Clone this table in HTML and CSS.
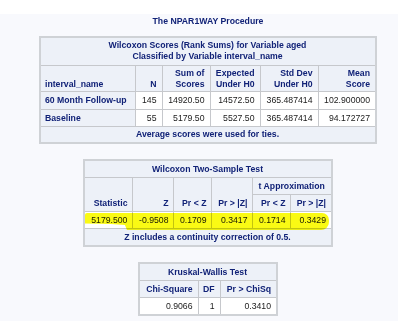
FILE: index.html
```html
<!DOCTYPE html>
<html>
<head>
<meta charset="utf-8">
<link rel="stylesheet" href="styles.css">
</head>
<body>
<div class="topband"></div>
<main class="page">
  <div class="proc-title">The NPAR1WAY Procedure</div>

  <table class="t t1">
    <colgroup>
      <col class="c95"><col class="c27"><col class="c48"><col class="c50"><col class="c58"><col class="c58">
    </colgroup>
    <thead>
      <tr class="r-title2"><th colspan="6" class="ctr">Wilcoxon Scores (Rank Sums) for Variable aged<br>Classified by Variable interval_name</th></tr>
      <tr class="r-head2">
        <th class="l b">interval_name</th>
        <th class="r b">N</th>
        <th class="r b">Sum of<br>Scores</th>
        <th class="r b">Expected<br>Under H0</th>
        <th class="r b">Std Dev<br>Under H0</th>
        <th class="r b">Mean<br>Score</th>
      </tr>
    </thead>
    <tbody>
      <tr class="r18"><th class="l">60 Month Follow-up</th><td>145</td><td>14920.50</td><td>14572.50</td><td>365.487414</td><td>102.900000</td></tr>
      <tr><th class="l">Baseline</th><td>55</td><td>5179.50</td><td>5527.50</td><td>365.487414</td><td>94.172727</td></tr>
      <tr class="r16"><th colspan="6" class="ctr">Average scores were used for ties.</th></tr>
    </tbody>
  </table>

  <table class="t t2">
    <colgroup>
      <col class="c49"><col class="c41"><col class="c38"><col class="c41"><col class="c38"><col class="c41">
    </colgroup>
    <thead>
      <tr><th colspan="6" class="ctr">Wilcoxon Two-Sample Test</th></tr>
      <tr>
        <th rowspan="2" class="r b">Statistic</th>
        <th rowspan="2" class="r b">Z</th>
        <th rowspan="2" class="r b">Pr &lt; Z</th>
        <th rowspan="2" class="r b">Pr &gt; |Z|</th>
        <th colspan="2" class="ctr">t Approximation</th>
      </tr>
      <tr>
        <th class="r">Pr &lt; Z</th>
        <th class="r">Pr &gt; |Z|</th>
      </tr>
    </thead>
    <tbody>
      <tr><td class="hl-anchor">5179.500<span class="marker"></span></td><td>-0.9508</td><td>0.1709</td><td>0.3417</td><td>0.1714</td><td>0.3429</td></tr>
      <tr><th colspan="6" class="ctr">Z includes a continuity correction of 0.5.</th></tr>
    </tbody>
  </table>

  <table class="t t3">
    <colgroup>
      <col class="c59"><col class="c22"><col class="c57">
    </colgroup>
    <thead>
      <tr><th colspan="3" class="ctr">Kruskal-Wallis Test</th></tr>
      <tr><th class="r">Chi-Square</th><th class="r">DF</th><th class="r">Pr &gt; ChiSq</th></tr>
    </thead>
    <tbody>
      <tr><td>0.9066</td><td>1</td><td>0.3410</td></tr>
    </tbody>
  </table>
</main>
</body>
</html>
```

FILE: styles.css
```css
html, body {
  margin: 0;
  padding: 0;
  background: #ffffff;
}
body {
  width: 400px;
  height: 321px;
  overflow: hidden;
  font-family: "Liberation Sans", Arial, sans-serif;
  font-size: 8.7px;
}
.topband {
  height: 14px;
  background: #ffffff;
}
.page {
  background: #f8f9fd;
  height: 307px;
  width: 398px;
  box-sizing: border-box;
  padding-left: 18px;
  display: flex;
  flex-direction: column;
  align-items: center;
}
.proc-title {
  font-weight: bold;
  color: #112277;
  line-height: 13px;
  margin-top: 1px;
  margin-bottom: 8px;
}
.t {
  border-collapse: collapse;
  table-layout: fixed;
  border: 2px solid #cfd2d6;
  background: #ffffff;
}
.t th, .t td {
  border: 1px solid #c6c8cc;
  line-height: 11px;
  padding: 3px 5px 2px 4px;
  white-space: nowrap;
  overflow: hidden;
}
.t th {
  background: #edf1f8;
  color: #112277;
  font-weight: bold;
}
.t td {
  color: #1a1a1a;
  text-align: right;
  background: #ffffff;
}
.ctr { text-align: center; }
.l { text-align: left; }
.r { text-align: right; }
.b { vertical-align: bottom; }

/* row heights (table 1) */
.t .r-title2 > * { padding-top: 2px; padding-bottom: 3px; }
.t .r-head2 > * { line-height: 10.5px; padding-top: 2px; padding-bottom: 2px; }
.t .r18 > * { padding-top: 3px; padding-bottom: 3px; }
.t .r16 > * { padding-top: 2px; padding-bottom: 2px; }

.c95 { width: 95px; }
.c27 { width: 27px; }
.c48 { width: 48px; }
.c50 { width: 50px; }
.c58 { width: 58px; }
.c49 { width: 49px; }
.c41 { width: 41px; }
.c38 { width: 38px; }
.c59 { width: 59px; }
.c22 { width: 22px; }
.c57 { width: 57px; }

.t1 { width: 336px; }

.t2 {
  width: 249px;
  margin-top: 15px;
}
.t .hl-anchor {
  position: relative;
  overflow: visible;
}
.marker {
  position: absolute;
  left: 0;
  top: 1px;
  width: 244px;
  height: 17px;
  background: #fafa14;
  mix-blend-mode: multiply;
  border-radius: 2px 7px 8px 2px;
  clip-path: polygon(0 0, 100% 0, 100% 100%, 42px 100%, 40px 70%, 26px 64%, 0 62%);
}

.t3 {
  width: 138px;
  margin-top: 15px;
}
```
